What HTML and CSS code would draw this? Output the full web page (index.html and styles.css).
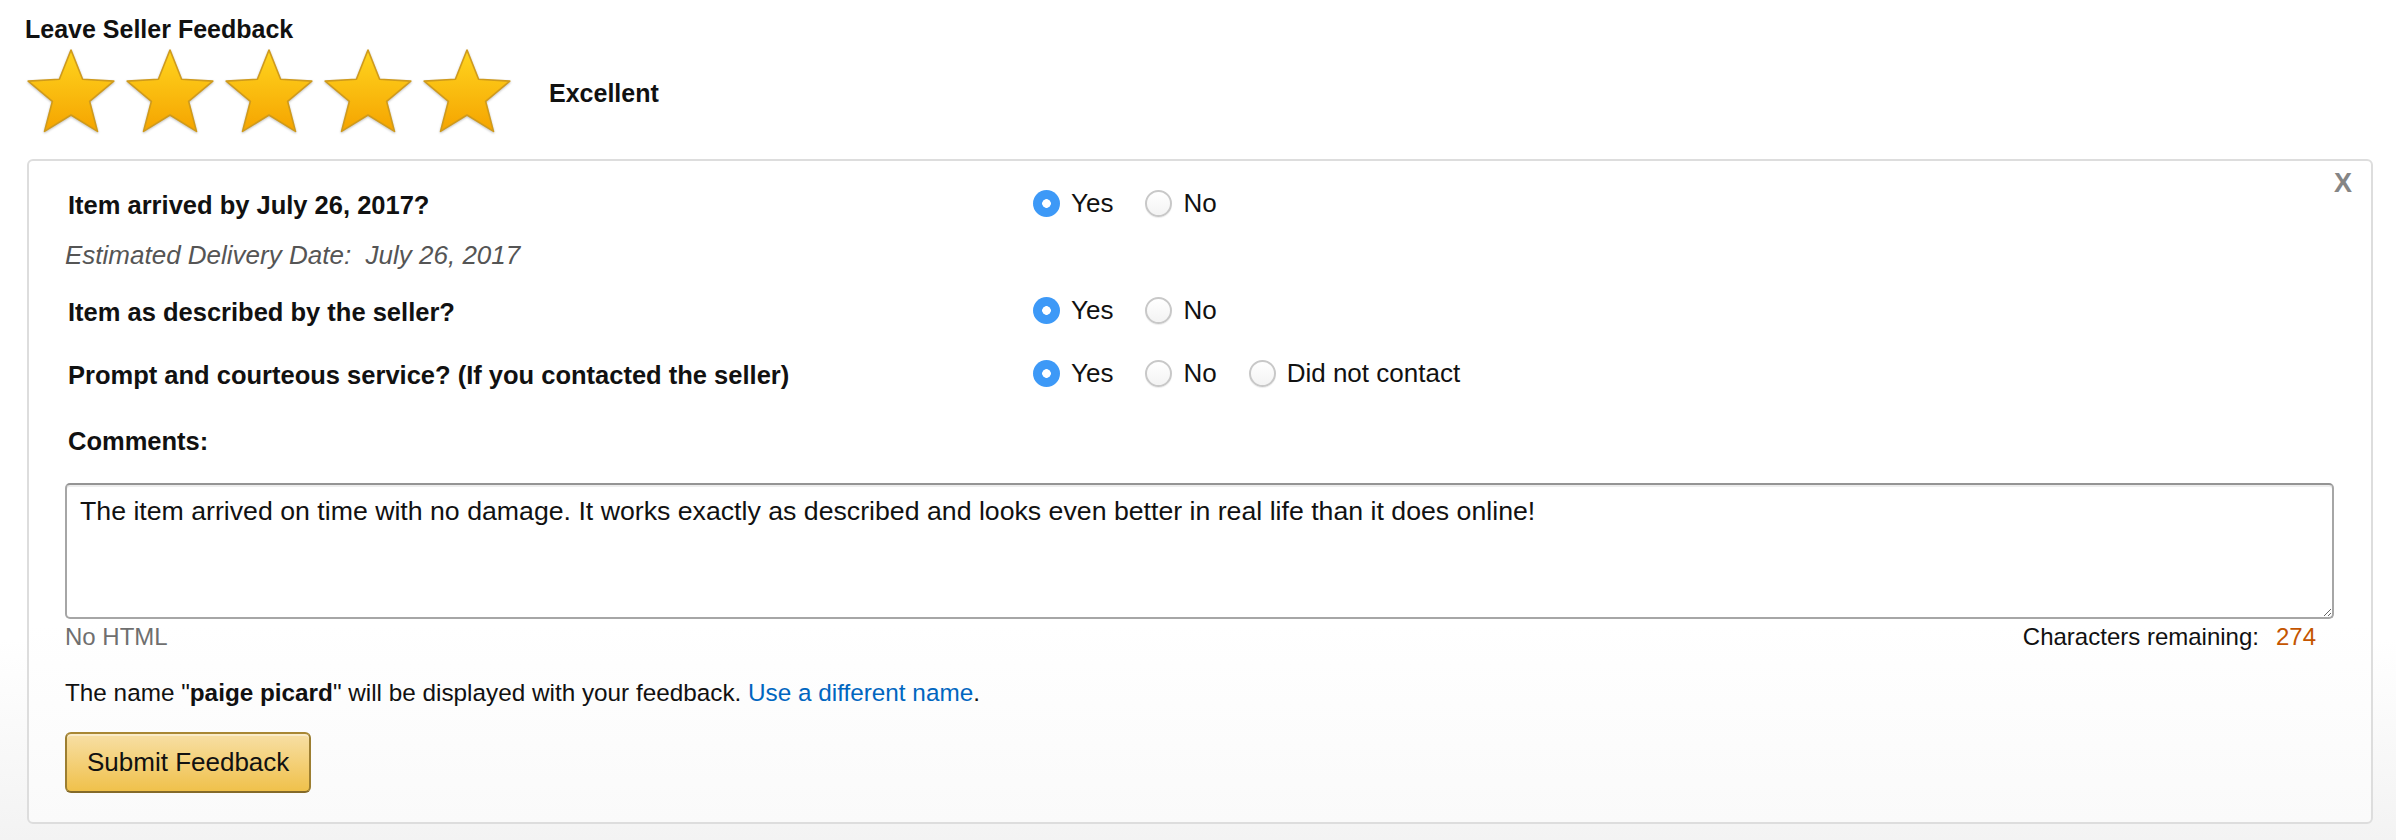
FILE: index.html
```html
<!DOCTYPE html>
<html lang="en">
<head>
<meta charset="UTF-8">
<title>Leave Seller Feedback</title>
<link rel="stylesheet" href="styles.css">
</head>
<body>

<!-- shared star shape -->
<svg class="defs" width="0" height="0">
  <defs>
    <linearGradient id="starFill" x1="0" y1="0" x2="0" y2="1">
      <stop offset="0" stop-color="#ffd51f"/>
      <stop offset="1" stop-color="#f5a400"/>
    </linearGradient>
    <symbol id="star" viewBox="0 0 88 86">
      <path d="M44 2 L55.6 31.2 L86.8 33.1 L62.6 53.3 L70.5 83.4 L44 67 L17.5 83.4 L25.4 53.3 L1.2 33.1 L32.4 31.2 Z"
            fill="url(#starFill)" stroke="#cf9a1c" stroke-width="1.6" stroke-linejoin="round"/>
    </symbol>
  </defs>
</svg>

<div class="page">
  <h1 class="title">Leave Seller Feedback</h1>

  <div class="rating">
    <div class="stars">
      <svg class="star"><use href="#star"/></svg>
      <svg class="star"><use href="#star"/></svg>
      <svg class="star"><use href="#star"/></svg>
      <svg class="star"><use href="#star"/></svg>
      <svg class="star"><use href="#star"/></svg>
    </div>
    <span class="rating-text">Excellent</span>
  </div>

  <div class="feedback-box">
    <a class="close" href="#">X</a>

    <div class="question-row">
      <div class="question">Item arrived by July 26, 2017?</div>
      <div class="options">
        <label class="option"><input type="radio" name="arrived" checked>Yes</label>
        <label class="option"><input type="radio" name="arrived">No</label>
      </div>
    </div>
    <div class="estimate">Estimated Delivery Date:&nbsp; July 26, 2017</div>

    <div class="question-row">
      <div class="question">Item as described by the seller?</div>
      <div class="options">
        <label class="option"><input type="radio" name="described" checked>Yes</label>
        <label class="option"><input type="radio" name="described">No</label>
      </div>
    </div>

    <div class="question-row">
      <div class="question">Prompt and courteous service? (If you contacted the seller)</div>
      <div class="options">
        <label class="option"><input type="radio" name="service" checked>Yes</label>
        <label class="option"><input type="radio" name="service">No</label>
        <label class="option"><input type="radio" name="service">Did not contact</label>
      </div>
    </div>

    <div class="comments-label">Comments:</div>
    <textarea class="comments">The item arrived on time with no damage. It works exactly as described and looks even better in real life than it does online!</textarea>

    <div class="note-row">
      <span class="no-html">No HTML</span>
      <span class="remaining">Characters remaining:<span class="count">274</span></span>
    </div>

    <p class="display-name">The name "<b>paige picard</b>" will be displayed with your feedback. <a class="link" href="#">Use a different name</a>.</p>

    <button class="submit-button">Submit Feedback</button>
  </div>
</div>

</body>
</html>
```

FILE: styles.css
```css
html { min-height: 100%; background: linear-gradient(#fff 640px, #f3f3f3 840px); }
body { margin: 0; padding: 14px 23px 0 27px; font-family: "Liberation Sans", Arial, sans-serif; font-size: 26px; line-height: 36px; color: #111; }
.defs { display: block; width: 0; height: 0; }

.title { margin: 0 0 0 -2px; font-size: 25px; line-height: 30px; font-weight: bold; }
.rating { display: flex; align-items: center; margin: 4px 0 25px; }
.stars { display: flex; gap: 11px; }
.star { display: block; width: 88px; height: 86px; filter: drop-shadow(0 1px 1px rgba(0, 0, 0, 0.25)); }
.rating-text { margin: 4px 0 0 38px; font-size: 25px; font-weight: bold; }

.feedback-box { position: relative; border: 2px solid #ddd; border-radius: 6px; padding: 26px 37px 29px 36px; background: linear-gradient(#fff 70%, #fafafa); }
.close { position: absolute; top: 9px; right: 19px; font-size: 27px; line-height: 27px; font-weight: bold; color: #858585; text-decoration: none; }

.question-row { display: grid; grid-template-columns: 968px auto; }
.question { font-size: 25.5px; font-weight: bold; padding-left: 3px; }
.estimate { margin-top: 14px; font-style: italic; color: #555; }
.estimate + .question-row { margin-top: 21px; }
.question-row + .question-row { margin-top: 27px; }

.options { display: flex; margin-top: -4px; }
.option { display: flex; align-items: center; gap: 11px; margin-right: 32px; }
.option input { appearance: none; -webkit-appearance: none; box-sizing: border-box; width: 27px; height: 27px; margin: 0; border: 2px solid #c8c8c8; border-radius: 50%; background: linear-gradient(#fff, #f3f3f3); box-shadow: 0 1px 1px rgba(0, 0, 0, 0.08); }
.option input:checked { border: none; background: radial-gradient(circle, #fff 0 4px, #3d99f7 4.6px); box-shadow: none; }

.comments-label { margin-top: 30px; font-size: 25.5px; font-weight: bold; padding-left: 3px; }
.comments { display: block; box-sizing: border-box; width: 100%; height: 136px; margin: 24px 0 0; padding: 8px 13px; border: 2px solid #a6a6a6; border-top-color: #949494; border-radius: 5px; font: inherit; font-size: 26.7px; color: #111; box-shadow: inset 0 2px 0 rgba(0, 0, 0, 0.07); }

.note-row { display: flex; justify-content: space-between; margin-top: 2px; font-size: 24px; line-height: 32px; }
.no-html { color: #6f6f6f; }
.remaining { margin-right: 18px; }
.count { margin-left: 17px; color: #c45500; }

.display-name { margin: 22px 0 0; font-size: 24.3px; }
.link { color: #0066c0; text-decoration: none; }

.submit-button { display: block; height: 61px; margin-top: 21px; padding: 0 20px; border: 2px solid; border-color: #a88734 #9c7e31 #846a29; border-radius: 6px; background: linear-gradient(#f7dfa5, #f0c14b); box-shadow: inset 0 2px 0 rgba(255, 255, 255, 0.4); font: inherit; line-height: 57px; color: #111; }
```
